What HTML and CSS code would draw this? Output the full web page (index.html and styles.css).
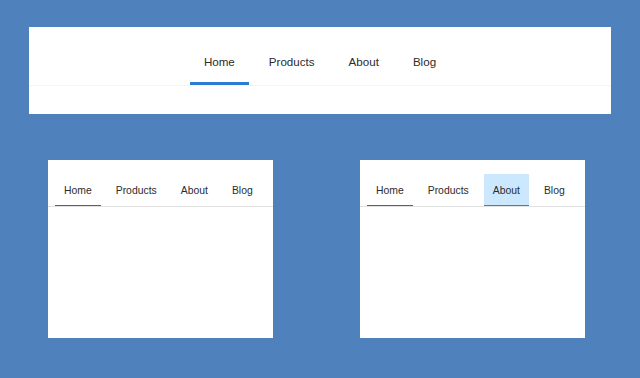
FILE: index.html
```html
<!DOCTYPE html>
<html lang="en">
<head>
  <meta charset="UTF-8" />
  <meta name="viewport" content="width=device-width, initial-scale=1.0" />
  <title>Tab Strips</title>
  <link rel="stylesheet" href="styles.css">
</head>
<body>
  <div class="page">
    <div class="panel wide">
      <nav class="tabs large">
        <a class="tab active">Home</a>
        <a class="tab">Products</a>
        <a class="tab">About</a>
        <a class="tab">Blog</a>
      </nav>
    </div>

    <div class="row">
      <div class="panel small">
        <nav class="tabs compact">
          <a class="tab active">Home</a>
          <a class="tab">Products</a>
          <a class="tab">About</a>
          <a class="tab">Blog</a>
        </nav>
      </div>
      <div class="panel small">
        <nav class="tabs compact">
          <a class="tab active">Home</a>
          <a class="tab">Products</a>
          <a class="tab hover">About</a>
          <a class="tab">Blog</a>
        </nav>
      </div>
    </div>
  </div>
</body>
</html>
```

FILE: styles.css
```css
body {
  margin: 0;
  background: #4f81bd;
  font-family: 'Liberation Sans', Arial, sans-serif;
  color: #2b2b2b;
  height: 378px;
  overflow: hidden;
}

.page {
  padding: 27px 29px;
}

.panel {
  background: #fff;
}

.wide {
  height: 87px;
  padding-top: 12px;
  box-sizing: border-box;
}

.row {
  display: flex;
  gap: 87px;
  margin-top: 46px;
  padding-left: 19px;
}

.small {
  width: 225px;
  height: 178px;
  padding: 14px 0 0 0;
  box-sizing: border-box;
}

.tabs {
  display: flex;
}

.tab {
  display: flex;
  align-items: center;
  cursor: pointer;
}

/* big centered strip */
.large {
  justify-content: center;
  gap: 6px;
  border-bottom: 1px solid #f4f5f6;
}
.large .tab {
  height: 46px;
  padding: 0 14px;
  font-size: 11.6px;
  box-sizing: border-box;
  border-bottom: 3px solid transparent;
  padding-top: 2px;
}
.large .tab.active {
  border-bottom-color: #2b7cd3;
}

/* compact strips */
.compact {
  gap: 6px;
  padding-left: 7px;
  border-bottom: 1px solid #e1e1e1;
}
.compact .tab {
  height: 32px;
  padding: 1px 9px 0;
  font-size: 10.4px;
  box-sizing: border-box;
  border-bottom: 1px solid transparent;
}
.compact .tab.active {
  border-bottom-color: #2a6cb3;
}
.compact .tab.hover {
  background: #cce8ff;
  border-bottom-color: #3b82c8;
}
```
